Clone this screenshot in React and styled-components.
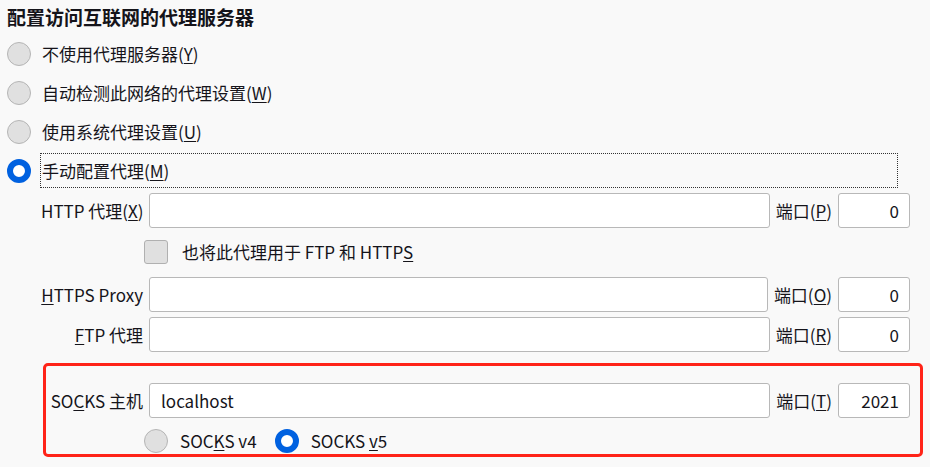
import React from "react";
import styled, { createGlobalStyle } from "styled-components";

const GlobalStyle = createGlobalStyle`
  html, body {
    margin: 0;
    background: #f9f9f9;
  }
  body {
    font-family: "Noto Sans CJK SC", "Noto Sans", sans-serif;
    color: #15141a;
    font-size: 17px;
  }
`;

const Page = styled.div`
  width: 930px;
  height: 467px;
  padding: 0 7px;
  box-sizing: border-box;
  overflow: hidden;
`;

const Title = styled.h1`
  margin: 0;
  height: 34px;
  line-height: 34px;
  font-size: 19px;
  font-weight: 700;
`;

const RadioList = styled.div`
  display: flex;
  flex-direction: column;
`;

const RadioRow = styled.label`
  display: flex;
  align-items: center;
  height: 39px;
  gap: 10px;
`;

const Radio = styled.span`
  flex: none;
  width: 24px;
  height: 24px;
  box-sizing: border-box;
  border-radius: 50%;
  background: ${(p) => (p.$checked ? "#fff" : "#e0e0e0")};
  border: ${(p) => (p.$checked ? "6px solid #0061e0" : "1px solid #b5b5b5")};
`;

const RadioText = styled.span`
  flex: ${(p) => (p.$focused ? "1" : "none")};
  height: 33px;
  line-height: 33px;
  padding-left: 1px;
  margin-right: 26px;
  outline: ${(p) => (p.$focused ? "1px dotted #333" : "none")};
`;

const Fields = styled.div`
  margin-left: 34px;
  width: 869px;
  padding-top: 3px;
`;

const FieldRow = styled.div`
  display: flex;
  align-items: center;
  gap: 6px;
  margin-top: ${(p) => p.$top || 0}px;
`;

const FieldLabel = styled.span`
  flex: none;
  width: 102px;
  text-align: right;
  white-space: nowrap;
`;

const TextBox = styled.div`
  flex: 1;
  height: 35px;
  box-sizing: border-box;
  background: #fff;
  border: 1px solid #b8b8b8;
  border-radius: 3px;
  display: flex;
  align-items: center;
  padding: 0 11px;
`;

const PortLabel = styled.span`
  flex: none;
  white-space: nowrap;
`;

const PortBox = styled(TextBox)`
  flex: none;
  width: 72px;
  justify-content: flex-end;
  padding-right: 10px;
`;

const OptionRow = styled.div`
  display: flex;
  align-items: center;
  padding-left: 103px;
  margin-top: ${(p) => p.$top || 0}px;
  gap: 18px;
`;

const Option = styled.label`
  display: flex;
  align-items: center;
  gap: ${(p) => p.$gap || 12}px;
  height: 25px;
`;

const Checkbox = styled.span`
  width: 24px;
  height: 24px;
  box-sizing: border-box;
  background: #e0e0e0;
  border: 1px solid #b0b0b0;
  border-radius: 3px;
`;

const SocksGroup = styled.div`
  position: relative;
  margin-top: 31px;
`;

const Highlight = styled.div`
  position: absolute;
  left: 2px;
  right: -13px;
  top: -20px;
  bottom: -4px;
  border: 3px solid #ff2418;
  border-radius: 5px;
  pointer-events: none;
`;

const Key = styled.u`
  text-underline-offset: 2px;
`;

const Field = ({ label, value, portKey, portValue, top }) => (
  <FieldRow $top={top}>
    <FieldLabel>{label}</FieldLabel>
    <TextBox>{value}</TextBox>
    <PortLabel>
      端口(<Key>{portKey}</Key>)
    </PortLabel>
    <PortBox>{portValue}</PortBox>
  </FieldRow>
);

export default function App() {
  return (
    <Page>
      <GlobalStyle />
      <Title>配置访问互联网的代理服务器</Title>
      <RadioList>
        <RadioRow>
          <Radio />
          <RadioText>
            不使用代理服务器(<Key>Y</Key>)
          </RadioText>
        </RadioRow>
        <RadioRow>
          <Radio />
          <RadioText>
            自动检测此网络的代理设置(<Key>W</Key>)
          </RadioText>
        </RadioRow>
        <RadioRow>
          <Radio />
          <RadioText>
            使用系统代理设置(<Key>U</Key>)
          </RadioText>
        </RadioRow>
        <RadioRow>
          <Radio $checked />
          <RadioText $focused>
            手动配置代理(<Key>M</Key>)
          </RadioText>
        </RadioRow>
      </RadioList>
      <Fields>
        <Field
          label={
            <>
              HTTP 代理(<Key>X</Key>)
            </>
          }
          portKey="P"
          portValue="0"
        />
        <OptionRow $top={11}>
          <Option $gap={14}>
            <Checkbox />
            <span>
              也将此代理用于 FTP 和 HTTP<Key>S</Key>
            </span>
          </Option>
        </OptionRow>
        <Field
          top={13}
          label={
            <>
              <Key>H</Key>TTPS Proxy
            </>
          }
          portKey="O"
          portValue="0"
        />
        <Field
          top={5}
          label={
            <>
              <Key>F</Key>TP 代理
            </>
          }
          portKey="R"
          portValue="0"
        />
        <SocksGroup>
          <Field
            label={
              <>
                SO<Key>C</Key>KS 主机
              </>
            }
            value="localhost"
            portKey="T"
            portValue="2021"
          />
          <OptionRow $top={10}>
            <Option>
              <Radio />
              <span>
                SOC<Key>K</Key>S v4
              </span>
            </Option>
            <Option>
              <Radio $checked />
              <span>
                SOCKS <Key>v</Key>5
              </span>
            </Option>
          </OptionRow>
          <Highlight />
        </SocksGroup>
      </Fields>
    </Page>
  );
}
